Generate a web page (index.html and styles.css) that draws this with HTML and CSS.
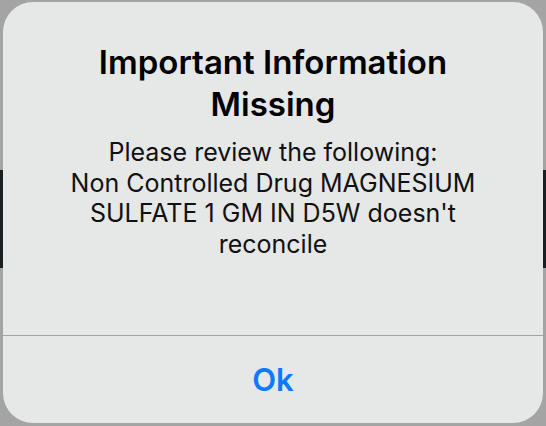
FILE: index.html
```html
<!DOCTYPE html>
<html lang="en">
<head>
<meta charset="utf-8">
<title>Important Information Missing</title>
<link rel="stylesheet" href="styles.css">
</head>
<body>
<div class="screen">
  <div class="band"></div>
</div>
<div class="alert" role="alertdialog">
  <div class="alert-body">
    <h1 class="alert-title">Important Information<br>Missing</h1>
    <p class="alert-message">Please review the following:<br>Non Controlled Drug MAGNESIUM<br>SULFATE 1 GM IN D5W doesn't<br>reconcile</p>
  </div>
  <div class="alert-actions">
    <button class="alert-btn" type="button">Ok</button>
  </div>
</div>
</body>
</html>
```
FILE: styles.css
```css
html, body {
  margin: 0;
  padding: 0;
}
body {
  width: 546px;
  height: 426px;
  overflow: hidden;
  background: #a4a4a4;
  font-family: Inter, "Noto Sans", "Liberation Sans", sans-serif;
  position: relative;
}
.screen {
  height: 426px;
  display: flex;
  flex-direction: column;
  padding-top: 170px;
  box-sizing: border-box;
}
.band {
  height: 98px;
  background: #1a1f21;
}
.alert {
  position: absolute;
  left: 3px;
  top: 2px;
  width: 540px;
  height: 421px;
  border-radius: 30px;
  background: #e6e7e7;
  display: flex;
  flex-direction: column;
  overflow: hidden;
}
.alert-body {
  flex: 1;
  padding: 39px 12px 0;
  text-align: center;
}
.alert-title {
  margin: 0;
  font-size: 33px;
  line-height: 42px;
  font-weight: 600;
  color: #000;
}
.alert-message {
  margin: 12px 0 0;
  font-size: 25px;
  line-height: 30.5px;
  font-weight: 400;
  color: #111;
}
.alert-actions {
  height: 87px;
  border-top: 1px solid #a3a3a3;
  display: flex;
  align-items: center;
  justify-content: center;
}
.alert-btn {
  border: 0;
  background: none;
  padding: 0;
  font-family: inherit;
  font-size: 31px;
  font-weight: 600;
  color: #0a7aff;
}
```
